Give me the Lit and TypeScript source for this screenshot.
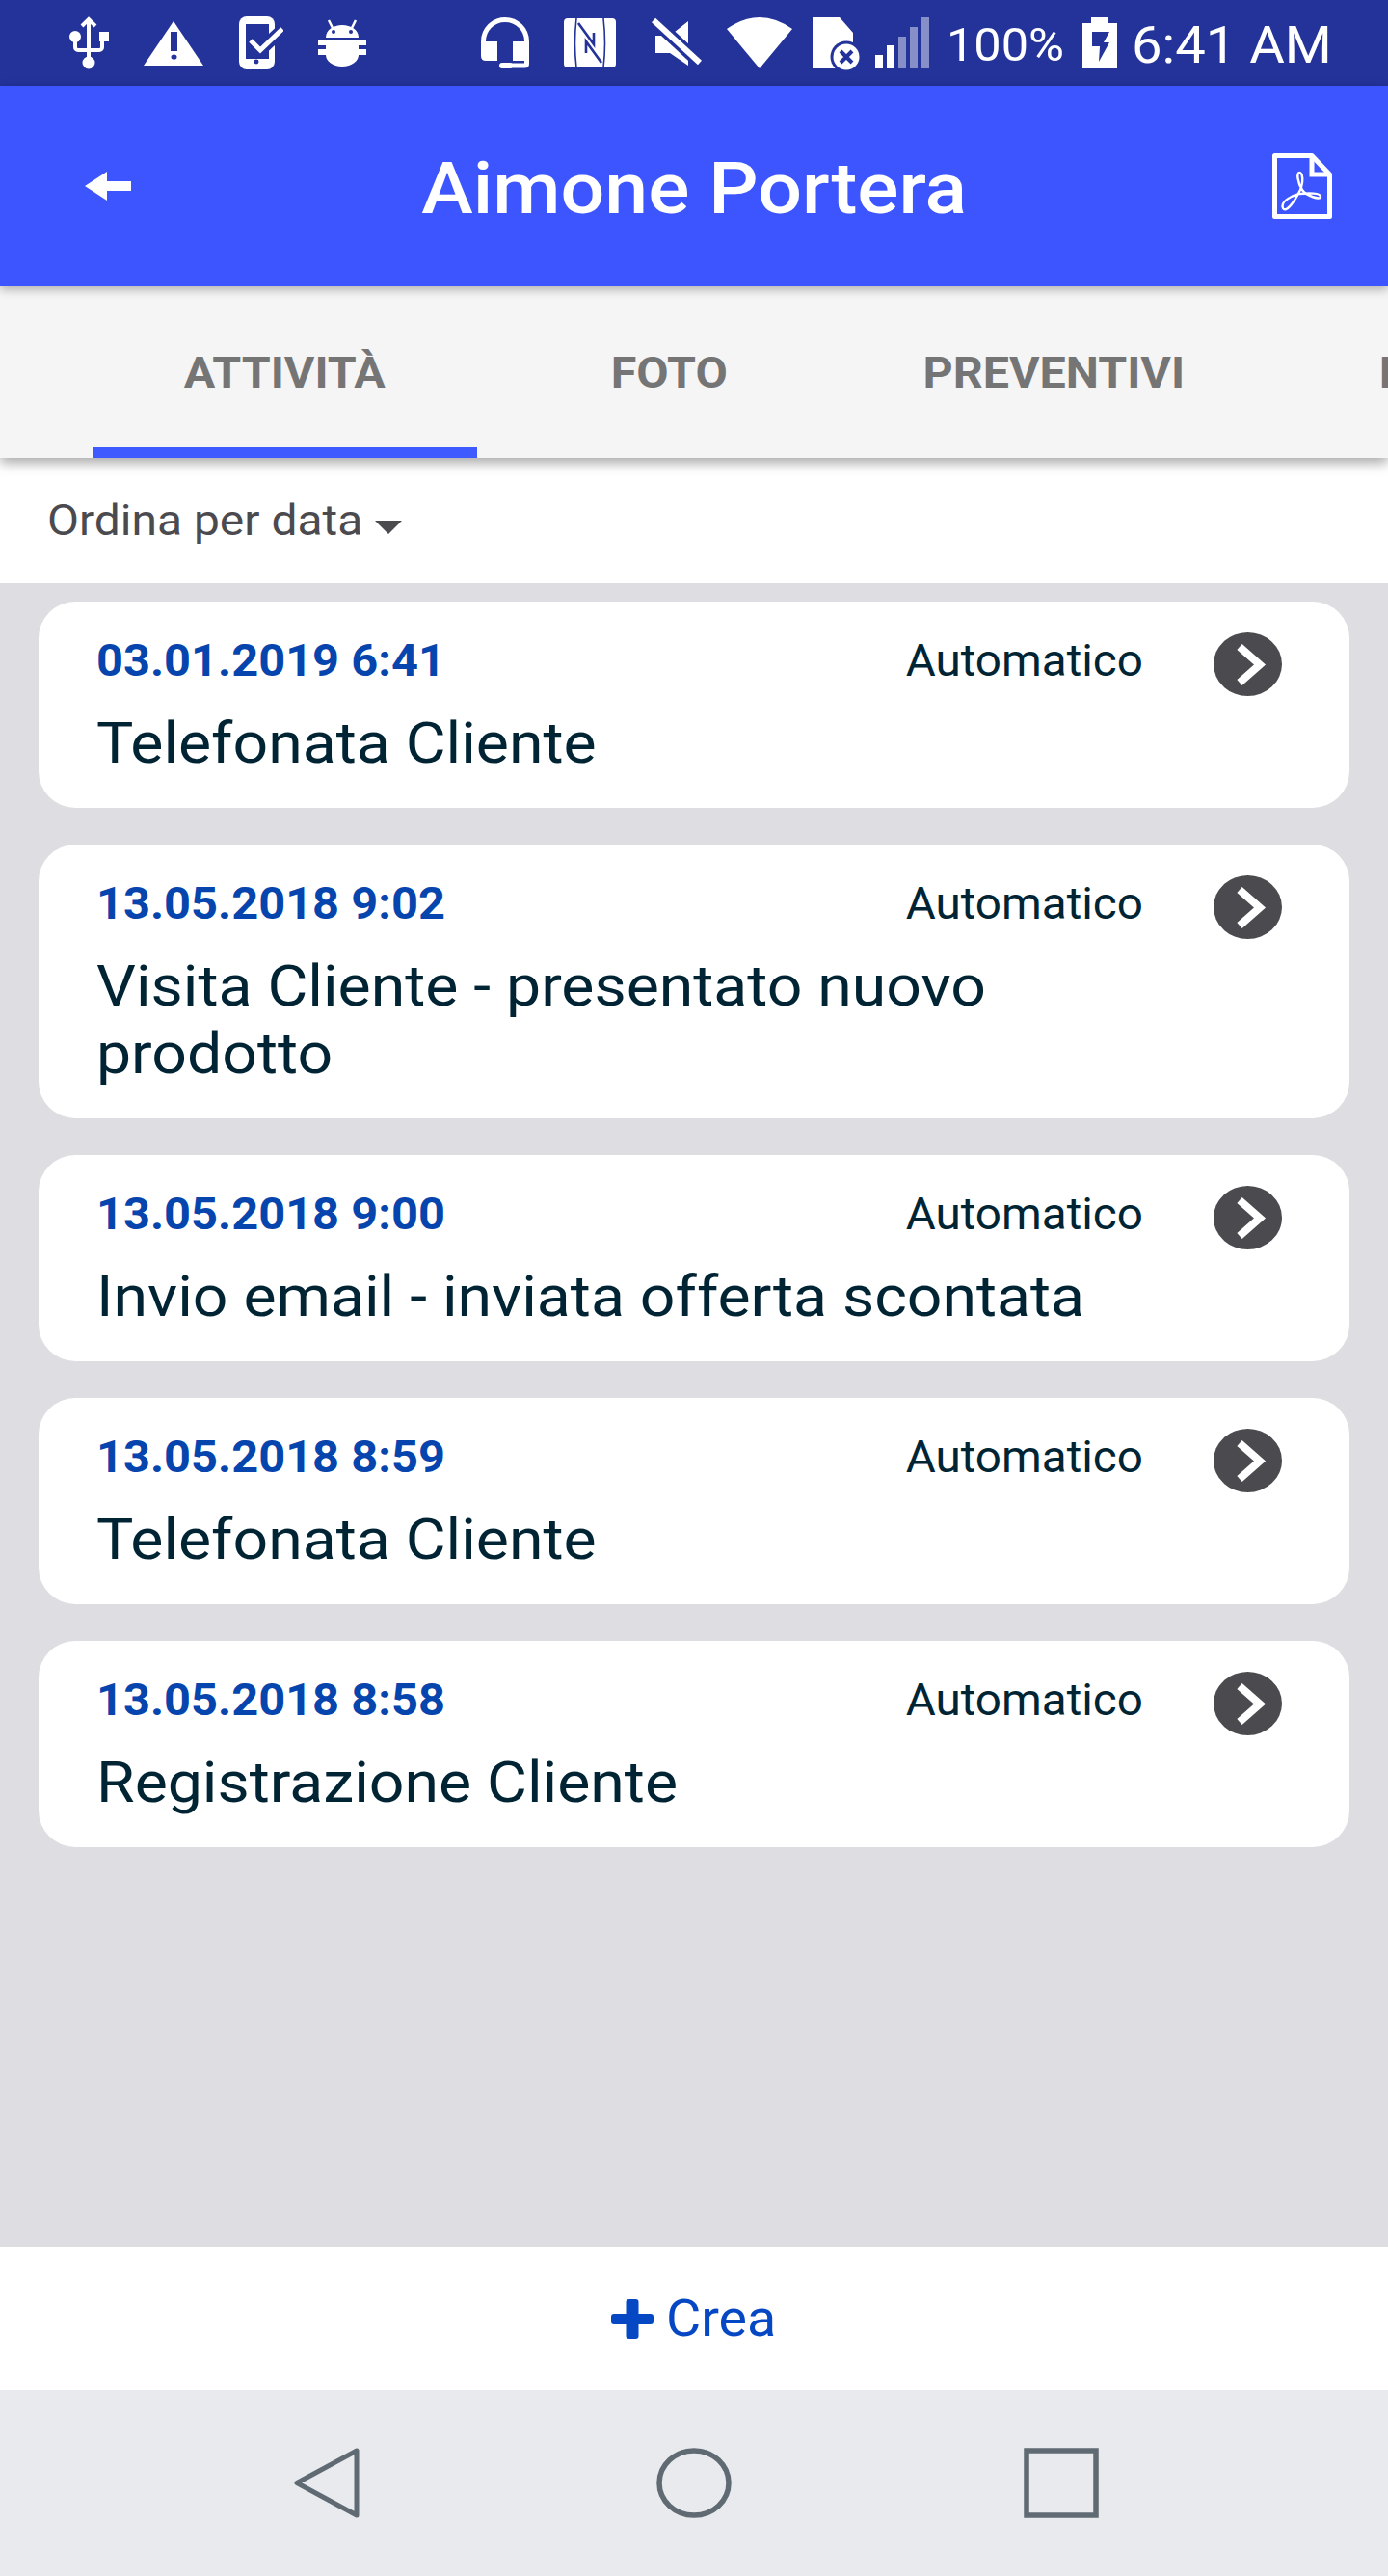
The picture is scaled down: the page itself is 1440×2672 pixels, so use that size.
import { LitElement, css, html, svg } from 'lit';
import { customElement } from 'lit/decorators.js';

const BAR = '#23339a';

interface Activity {
    date: string;
    kind: string;
    title: string;
}

const ACTIVITIES: Activity[] = [
    { date: '03.01.2019 6:41', kind: 'Automatico', title: 'Telefonata Cliente' },
    { date: '13.05.2018 9:02', kind: 'Automatico', title: 'Visita Cliente - presentato nuovo prodotto' },
    { date: '13.05.2018 9:00', kind: 'Automatico', title: 'Invio email - inviata offerta scontata' },
    { date: '13.05.2018 8:59', kind: 'Automatico', title: 'Telefonata Cliente' },
    { date: '13.05.2018 8:58', kind: 'Automatico', title: 'Registrazione Cliente' },
];

const TABS = ['ATTIVITÀ', 'FOTO', 'PREVENTIVI', 'NOTE'];

// status bar icons: every svg is 89px tall so y values are screen values
const usb = svg`
    <g fill="none" stroke="#fff" stroke-width="4">
        <path d="M20 20V62M13 27l7-7 7 7" />
        <path d="M6 40V49a3 3 0 0 0 3 3H31a3 3 0 0 0 3-3V42" />
    </g>
    <circle cx="20" cy="65" r="6.5" fill="#fff" />
    <circle cx="6" cy="38" r="6" fill="#fff" />
    <rect x="31" y="33" width="10" height="10" fill="#fff" />`;

const warning = svg`
    <path d="M31 22L62 68H0Z" fill="#fff" />
    <rect x="28" y="33" width="7" height="20" fill="${BAR}" />
    <ellipse cx="31.5" cy="59" rx="3" ry="2.6" fill="${BAR}" />`;

const phoneCheck = svg`
    <rect x="0" y="17" width="37" height="55" rx="8" fill="#fff" />
    <rect x="7" y="25" width="24" height="36" fill="${BAR}" />
    <path d="M12 42L22 52L46 30" fill="none" stroke="${BAR}" stroke-width="13" />
    <path d="M12 42L22 52L45 30" fill="none" stroke="#fff" stroke-width="5" />
    <ellipse cx="18" cy="64" rx="2.5" ry="2.4" fill="${BAR}" />`;

const android = svg`
    <path d="M8 39C8 31 16 26 25 26S42 31 42 39Z" fill="#fff" />
    <path d="M11 21L15 29M39 21L35 29" stroke="#fff" stroke-width="2.5" />
    <circle cx="16" cy="33" r="2" fill="${BAR}" />
    <circle cx="34" cy="33" r="2" fill="${BAR}" />
    <path d="M0 41H50V47H42V51H50V57H42C42 63 35 69 25 69S8 63 8 57H0V51H8V47H0Z" fill="#fff" />`;

const headset = svg`
    <path d="M2.5 46V43a22.5 22.5 0 0 1 45 0V66q0 2-2 2H30" fill="none" stroke="#fff" stroke-width="5" />
    <path d="M0 43H17V63H5q-5 0-5-5Z" fill="#fff" />
    <rect x="33" y="43" width="17" height="20" fill="#fff" />
    <rect x="19" y="65" width="14" height="6" rx="3" fill="#fff" />`;

const nfc = svg`
    <rect x="0" y="19" width="54" height="51" rx="4" fill="#fff" />
    <g fill="none" stroke="${BAR}" stroke-width="1.6">
        <path d="M13 19Q10 45 13 70M41 19Q44 45 41 70" />
        <path d="M15 24L31 46V34M39 65L23 43V55" stroke-width="2.6" />
    </g>`;

const mute = svg`
    <path d="M4 37H19L38 22V68L19 55H4Z" fill="#fff" />
    <path d="M0 19L52 67" stroke="${BAR}" stroke-width="13" />
    <path d="M2 21L50 65" stroke="#fff" stroke-width="6" />`;

const wifi = svg`<path d="M0 30Q34 6 68 30L34 71Z" fill="#fff" />`;

const sim = svg`
    <path d="M0 18H28L42 34V71H0Z" fill="#fff" />
    <circle cx="35" cy="59" r="16.5" fill="${BAR}" />
    <circle cx="35" cy="59" r="13.5" fill="#fff" />
    <path d="M29 53L41 65M41 53L29 65" stroke="${BAR}" stroke-width="4" />`;

const signal = svg`
    <rect x="0" y="57" width="8" height="14" fill="#fff" />
    <rect x="12" y="47" width="8" height="24" fill="#fff" />
    <g fill="#fff" opacity="0.45">
        <rect x="24" y="38" width="8" height="33" />
        <rect x="36" y="28" width="8" height="43" />
        <rect x="48" y="18" width="8" height="53" />
    </g>`;

const battery = svg`
    <path d="M9 18H27V24H36V71H0V24H9Z" fill="#fff" />
    <path d="M10 33H28L22 44H28L17 64L18 48H10Z" fill="${BAR}" />`;

@customElement('app-root')
export class AppRoot extends LitElement
{
    // the reference is stretched sideways a little, so text gets a scaleX of its own
    static styles = css`
:host {
    display: block;
    width: 1440px;
    height: 2672px;
    font-family: Roboto, "Noto Sans", sans-serif;
    background: #dddde2;
}

.page {
    display: flex;
    flex-direction: column;
    height: 100%;
    overflow: hidden;
}

.status {
    display: flex;
    align-items: flex-start;
    height: 89px;
    flex: none;
    padding-left: 72px;
    background: #23339a;
    color: #fff;
    font-weight: 400;
    line-height: 94px;
}

.status svg {
    display: block;
    flex: none;
    height: 89px;
    margin-left: 36px;
}

.status svg.first { margin-left: 0; }
.status svg.g38 { margin-left: 37px; }
.status svg.g119 { margin-left: 119px; }
.status svg.g26 { margin-left: 26px; }
.status svg.g21 { margin-left: 21px; }
.status svg.g14 { margin-left: 14px; }
.status svg.g18 { margin-left: 18px; }

.percent {
    width: 123px;
    margin-left: 18px;
    font-size: 49px;
    transform: scaleX(1.03);
    transform-origin: left;
}

.clock {
    margin-left: 15px;
    font-size: 54px;
    white-space: nowrap;
    transform: scaleX(1.04);
    transform-origin: left;
}

.appbar {
    position: relative;
    z-index: 3;
    display: grid;
    grid-template-columns: 1fr auto 1fr;
    align-items: center;
    flex: none;
    height: 208px;
    padding: 0 58px;
    box-sizing: border-box;
    background: #3d55ff;
    color: #fff;
    box-shadow: 0 3px 10px rgba(0, 0, 0, 0.3);
}

.title {
    padding-top: 4px;
    font-size: 75px;
    font-weight: 500;
    transform: scaleX(1.075);
}

.pdf { justify-self: end; display: block; }
.back { display: block; margin-left: 30px; }

.tabs {
    position: relative;
    z-index: 2;
    display: flex;
    flex: none;
    height: 178px;
    padding-left: 96px;
    overflow: hidden;
    background: #f5f5f5;
    box-shadow: 0 5px 12px rgba(0, 0, 0, 0.35);
    clip-path: inset(0 0 -20px 0);
}

.tab {
    display: flex;
    flex: none;
    justify-content: center;
    box-sizing: border-box;
    width: 399px;
    padding-top: 63px;
    font-size: 45px;
    font-weight: 700;
    line-height: 54px;
    color: #757575;
}

.tab span {
    display: block;
    transform: scaleX(1.075);
}

.tab.active { border-bottom: 11px solid #3f5bff; }

.sort {
    display: flex;
    align-items: center;
    flex: none;
    height: 130px;
    padding-left: 49px;
    gap: 36px;
    background: #fff;
    color: #4a4a4f;
    font-size: 44.6px;
}

.sort span {
    transform: scaleX(1.075);
    transform-origin: left;
}

.sort svg { display: block; margin-top: 14px; }

.list {
    display: flex;
    flex: 1;
    flex-direction: column;
    gap: 38px;
    padding: 19px 40px;
    min-height: 0;
}

.card {
    box-sizing: border-box;
    padding: 34px 70px 32px 60px;
    border-radius: 38px;
    background: #fff;
    color: #002433;
}

.head {
    display: flex;
    align-items: flex-start;
    height: 78px;
}

.date {
    font-size: 46px;
    font-weight: 700;
    line-height: 54px;
    color: #0645ad;
    transform: scaleX(1.06);
    transform-origin: left;
}

.kind {
    margin: 0 -1px 0 auto;
    font-size: 46px;
    line-height: 54px;
    transform: scaleX(1.035);
    transform-origin: right;
}

.go {
    display: block;
    margin: -2px 0 0 74px;
}

.text {
    width: 960px;
    font-size: 60px;
    line-height: 70px;
    transform: scaleX(1.072);
    transform-origin: left;
}

.create {
    display: flex;
    align-items: center;
    justify-content: center;
    flex: none;
    gap: 13px;
    height: 148px;
    padding-right: 6px;
    box-sizing: border-box;
    background: #fff;
    color: #0648c4;
    font-size: 53px;
}

.create span {
    transform: scaleX(1.05);
    transform-origin: left;
}

.nav {
    display: flex;
    align-items: flex-start;
    flex: none;
    height: 193px;
    padding: 60px 0 0 305px;
    box-sizing: border-box;
    background: #e9eaee;
}

.nav svg { display: block; }
.nav .home { margin: 0 303px 0 308px; }
`;

    private renderCard(item: Activity)
    {
        return html`
<div class="card">
    <div class="head">
        <span class="date">${item.date}</span>
        <span class="kind">${item.kind}</span>
        <svg class="go" width="71" height="66" viewBox="0 0 71 66">
            <ellipse cx="35.5" cy="33" rx="35.5" ry="33" fill="#4a4a4f" />
            <path d="M27 15L48 33.5L27 52" fill="none" stroke="#fff" stroke-width="8" />
        </svg>
    </div>
    <div class="text">${item.title}</div>
</div>`;
    }

    protected render(): unknown
    {
        return html`
<div class="page">
    <div class="status">
        <svg class="first" width="41" viewBox="0 0 41 89">${usb}</svg>
        <svg width="62" viewBox="0 0 62 89">${warning}</svg>
        <svg class="g38" width="46" viewBox="0 0 46 89">${phoneCheck}</svg>
        <svg width="50" viewBox="0 0 50 89">${android}</svg>
        <svg class="g119" width="50" viewBox="0 0 50 89">${headset}</svg>
        <svg width="54" viewBox="0 0 54 89">${nfc}</svg>
        <svg class="g38" width="52" viewBox="0 0 52 89">${mute}</svg>
        <svg class="g26" width="68" viewBox="0 0 68 89">${wifi}</svg>
        <svg class="g21" width="51" viewBox="0 0 51 89">${sim}</svg>
        <svg class="g14" width="56" viewBox="0 0 56 89">${signal}</svg>
        <span class="percent">100%</span>
        <svg class="g18" width="36" viewBox="0 0 36 89">${battery}</svg>
        <span class="clock">6:41 AM</span>
    </div>
    <div class="appbar">
        <svg class="back" width="48" height="30" viewBox="0 0 48 30">
            <path d="M0 15L23 0V10H48V20H23V30Z" fill="#fff" />
        </svg>
        <div class="title">Aimone Portera</div>
        <svg class="pdf" width="62" height="68" viewBox="0 0 62 68">
            <path d="M2.5 2.5H41L59.5 22V65.5H2.5Z" fill="none" stroke="#fff" stroke-width="5" stroke-linejoin="round" />
            <path d="M41 2V22H60" fill="none" stroke="#fff" stroke-width="5" />
            <path d="M11 57C14 62 22 52 29 38C33 28 31 20 28 20C25 20 26 30 31 38C35 44 50 49 50 45C50 41 38 41 28 42C20 44 8 50 11 57Z"
                fill="none" stroke="#fff" stroke-width="2.4" />
        </svg>
    </div>
    <div class="tabs">
        ${TABS.map((t, i) => html`<div class="tab ${i === 0 ? 'active' : ''}"><span>${t}</span></div>`)}
    </div>
    <div class="sort">
        <span>Ordina per data</span>
        <svg width="28" height="14" viewBox="0 0 28 14"><path d="M0 0H28L14 14Z" fill="#4a4a4f" /></svg>
    </div>
    <div class="list">
        ${ACTIVITIES.map((a) => this.renderCard(a))}
    </div>
    <div class="create">
        <svg width="44" height="41" viewBox="0 0 44 41">
            <rect x="15.5" y="0" width="13" height="41" rx="3" fill="#0648c4" />
            <rect x="0" y="15" width="44" height="11" rx="3" fill="#0648c4" />
        </svg>
        <span>Crea</span>
    </div>
    <div class="nav">
        <svg width="68" height="73" viewBox="0 0 68 73">
            <path d="M65 3V70L3 36.5Z" fill="none" stroke="#5f6a72" stroke-width="5" stroke-linejoin="round" />
        </svg>
        <svg class="home" width="78" height="73" viewBox="0 0 78 73">
            <ellipse cx="39" cy="36.5" rx="36" ry="33.5" fill="none" stroke="#5f6a72" stroke-width="5.5" />
        </svg>
        <svg width="78" height="73" viewBox="0 0 78 73">
            <rect x="3" y="3" width="72" height="67" fill="none" stroke="#5f6a72" stroke-width="5.5" />
        </svg>
    </div>
</div>`;
    }
}
